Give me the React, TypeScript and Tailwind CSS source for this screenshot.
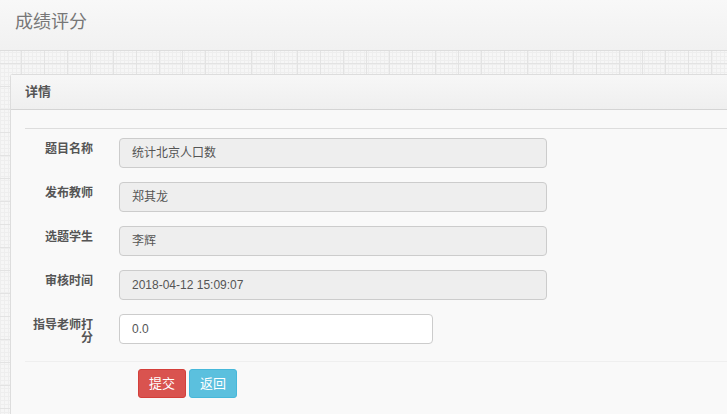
import React, { useState } from 'react';

const font = "font-['Liberation_Sans','Noto_Sans_CJK_SC',sans-serif]";

interface FieldProps {
    label: string;
    value: string;
}

const ReadonlyField: React.FC<FieldProps> = ({ label, value }) => (
    <div className="flex items-start mb-[14px]">
        <label className="w-[68px] shrink-0 text-right pt-[5px] leading-[13px] text-[12px] font-bold text-[#555]">
            {label}
        </label>
        <div className="ml-[26px] w-[428px] h-[30px] flex items-center px-[12px] bg-[#eeeeee] border border-[#cccccc] rounded-[4px] text-[12px] text-[#555]">
            {value}
        </div>
    </div>
);

export default function App() {
    const [score, setScore] = useState('0.0');

    return (
        <div
            className={`${font} w-[727px] h-[414px] overflow-hidden bg-[#f6f6f6] bg-[linear-gradient(to_right,#e3e3e3_1px,transparent_1px),linear-gradient(to_bottom,#e3e3e3_1px,transparent_1px),linear-gradient(to_right,#eeeeee_1px,transparent_1px),linear-gradient(to_bottom,#eeeeee_1px,transparent_1px)] bg-[size:23px_23px,23px_23px,4px_4px,4px_4px] bg-[position:21px_-6px,21px_-6px,0_0,0_0]`}
        >
            {/* page title */}
            <div className="h-[51px] flex items-center px-[15px] border-b border-[#dddddd] bg-[linear-gradient(to_bottom,#f8f8f8,#f1f1f1)]">
                <h1 className="text-[18px] text-[#777] font-normal -mt-[6px]">成绩评分</h1>
            </div>

            {/* panel */}
            <div className="ml-[10px] mt-[23px] h-[400px] border-l border-t border-[#dddddd] rounded-tl-[3px] bg-[#f9f9f9]">
                <div className="h-[35px] flex items-center px-[14px] border-b border-[#d4d4d4] bg-[linear-gradient(to_bottom,#f7f7f7,#efefef)]">
                    <span className="text-[13px] font-bold text-[#555]">详情</span>
                </div>

                <div className="pl-[14px] pt-[18px]">
                    <div className="border-t border-[#dddddd] mb-[9px]" />

                    <form onSubmit={(e) => e.preventDefault()}>
                        <ReadonlyField label="题目名称" value="统计北京人口数" />
                        <ReadonlyField label="发布教师" value="郑其龙" />
                        <ReadonlyField label="选题学生" value="李辉" />
                        <ReadonlyField label="审核时间" value="2018-04-12 15:09:07" />

                        <div className="flex items-start">
                            <label className="w-[68px] shrink-0 text-right pt-[5px] leading-[13px] text-[12px] font-bold text-[#555]">
                                指导老师打分
                            </label>
                            <input
                                type="text"
                                value={score}
                                onChange={(e) => setScore(e.target.value)}
                                className="ml-[26px] w-[314px] h-[30px] px-[12px] bg-white border border-[#cccccc] rounded-[4px] text-[12px] text-[#555] outline-none"
                            />
                        </div>

                        <div className="mt-[16px] border-t border-[#efefef]" />

                        <div className="flex gap-[3px] ml-[113px] mt-[7px]">
                            <button
                                type="submit"
                                className="w-[48px] h-[29px] rounded-[3px] bg-[#d9534f] border border-[#d43f3a] text-white text-[13px]"
                            >
                                提交
                            </button>
                            <button
                                type="button"
                                className="w-[48px] h-[29px] rounded-[3px] bg-[#5bc0de] border border-[#46b8da] text-white text-[13px]"
                            >
                                返回
                            </button>
                        </div>
                    </form>
                </div>
            </div>
        </div>
    );
}
